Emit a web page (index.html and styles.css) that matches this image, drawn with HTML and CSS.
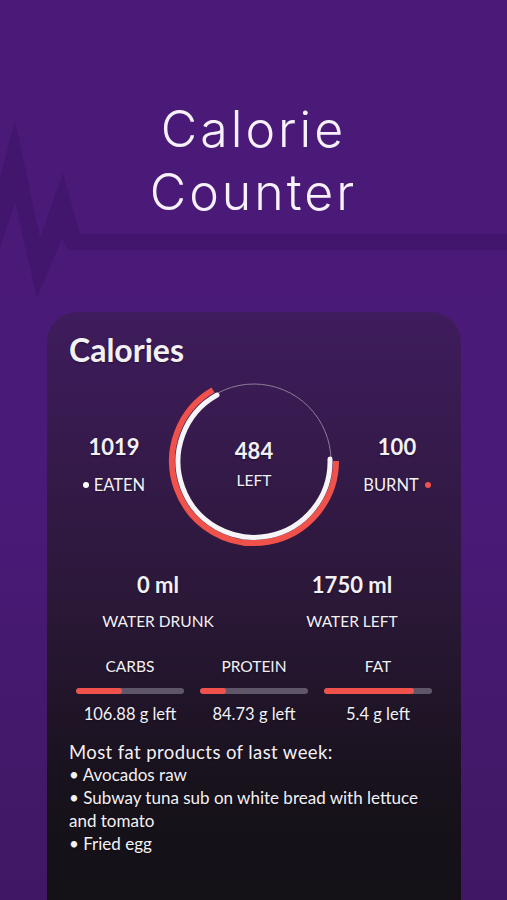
FILE: index.html
```html
<!DOCTYPE html>
<html lang="en">
<head>
<meta charset="UTF-8">
<meta name="viewport" content="width=device-width, initial-scale=1.0">
<title>Calorie Counter</title>
<link rel="stylesheet" href="styles.css">
</head>
<body>

<div class="screen">
  <svg class="pulse" width="507" height="320" viewBox="0 0 507 320">
    <polygon points="0,178 15,120 40,238 63,173 80,234 507,234 507,250 68,250 62,238 37,298 15,202 0,248" fill="#43166d"/>
  </svg>

  <h1 class="title">Calorie<br>Counter</h1>

  <div class="card">
    <h2 class="cardTitle">Calories</h2>

    <div class="summary">
      <div class="stat">
        <div class="num">1019</div>
        <div class="label"><span class="dot white"></span>EATEN</div>
      </div>
      <div class="ring">
        <svg width="172" height="172" viewBox="0 0 172 172">
          <circle cx="86" cy="86" r="77" fill="none" stroke="#8b7d98" stroke-width="1"/>
          <!-- red: from 3 o'clock clockwise to ~11 o'clock -->
          <path d="M 168 86 A 82 82 0 1 1 45 15" fill="none" stroke="#f0524b" stroke-width="6"/>
          <path d="M 162 84 A 76 76 0 1 1 49 20" fill="none" stroke="#f7f4f8" stroke-width="5" stroke-linecap="round"/>
        </svg>
        <div class="ringText">
          <div class="num">484</div>
          <div class="label">LEFT</div>
        </div>
      </div>
      <div class="stat burnt">
        <div class="num">100</div>
        <div class="label">BURNT<span class="dot red"></span></div>
      </div>
    </div>

    <div class="water">
      <div class="stat">
        <div class="num">0 ml</div>
        <div class="label">WATER DRUNK</div>
      </div>
      <div class="stat">
        <div class="num">1750 ml</div>
        <div class="label">WATER LEFT</div>
      </div>
    </div>

    <div class="macros">
      <div class="macro">
        <div class="macroName">CARBS</div>
        <div class="bar"><div class="fill" style="width: 43%"></div></div>
        <div class="macroLeft">106.88 g left</div>
      </div>
      <div class="macro">
        <div class="macroName">PROTEIN</div>
        <div class="bar"><div class="fill" style="width: 24%"></div></div>
        <div class="macroLeft">84.73 g left</div>
      </div>
      <div class="macro">
        <div class="macroName">FAT</div>
        <div class="bar"><div class="fill" style="width: 83%"></div></div>
        <div class="macroLeft">5.4 g left</div>
      </div>
    </div>

    <div class="products">
      <p class="productsHead">Most fat products of last week:</p>
      <p>• Avocados raw</p>
      <p>• Subway tuna sub on white bread with lettuce and tomato</p>
      <p>• Fried egg</p>
    </div>
  </div>
</div>

</body>
</html>
```

FILE: styles.css
```css
html, body {
  margin: 0;
  padding: 0;
}
body {
  background-color: #4b1a79;
  font-family: Lato, "Open Sans", sans-serif;
  color: #f4f1f6;
}
.screen {
  position: relative;
  width: 507px;
  height: 900px;
  overflow: hidden;
  background: linear-gradient(180deg, #4b1a79 0%, #4a1a78 55%, #3f1863 100%);
}
.pulse {
  position: absolute;
  top: 0;
  left: 0;
}
.title {
  position: relative;
  margin: 0;
  padding-top: 98px;
  text-align: center;
  font-family: Inter, Lato, sans-serif;
  font-weight: 300;
  font-size: 50px;
  line-height: 63px;
  letter-spacing: 3px;
  color: #f6f1fa;
}
.card {
  position: relative;
  margin: 88px 46px 0 47px;
  height: 620px;
  padding: 22px 22px 0 22px;
  border-radius: 30px 30px 0 0;
  background: linear-gradient(180deg, #3f1c5d 0%, #2b1838 45%, #17121b 75%, #131015 100%);
  text-shadow: 0 1px 2px rgba(0, 0, 0, 0.4);
}
.cardTitle {
  margin: 0;
  font-size: 32px;
  font-weight: 700;
  line-height: 32px;
}
.summary {
  display: grid;
  grid-template-columns: 90px 1fr 90px;
  align-items: center;
  margin-top: 9px;
}
.stat {
  text-align: center;
}
.summary .stat {
  margin-top: 7px;
}
.summary .burnt {
  margin-left: 6px;
}
.num {
  font-size: 22px;
  font-weight: 700;
  line-height: 26px;
}
.label {
  font-size: 16.5px;
  line-height: 20px;
  margin-top: 15px;
}
.dot {
  display: inline-block;
  width: 6px;
  height: 6px;
  border-radius: 50%;
  vertical-align: middle;
  position: relative;
  top: -2px;
}
.dot.white {
  background-color: #fff;
  margin-right: 5px;
}
.dot.red {
  background-color: #f0524b;
  margin-left: 6px;
}
.ring {
  position: relative;
  width: 172px;
  height: 172px;
  margin: 0 auto;
}
.ring svg {
  display: block;
}
.ringText {
  position: absolute;
  top: 63px;
  left: 0;
  right: 0;
  text-align: center;
}
.ringText .label {
  font-size: 15.5px;
  margin-top: 6px;
}
.water {
  display: grid;
  grid-template-columns: 178px 178px;
  column-gap: 16px;
  margin-top: 25px;
}
.water .label {
  font-size: 15.5px;
  margin-top: 13px;
}
.macros {
  display: grid;
  grid-template-columns: 108px 108px 108px;
  column-gap: 16px;
  justify-content: center;
  margin-top: 25px;
}
.macro {
  text-align: center;
}
.macroName {
  font-size: 15.5px;
  line-height: 20px;
}
.bar {
  height: 6px;
  margin-top: 12px;
  border-radius: 3px;
  background-color: #5f5769;
  overflow: hidden;
}
.fill {
  height: 100%;
  background-color: #f0524b;
  border-radius: 3px;
}
.macroLeft {
  font-size: 16.5px;
  line-height: 20px;
  margin-top: 10px;
}
.products {
  margin-top: 17px;
  font-size: 17px;
  line-height: 23px;
}
.products p {
  margin: 0;
}
.products .productsHead {
  font-size: 18.5px;
  line-height: 22px;
  letter-spacing: 0.4px;
}
```
